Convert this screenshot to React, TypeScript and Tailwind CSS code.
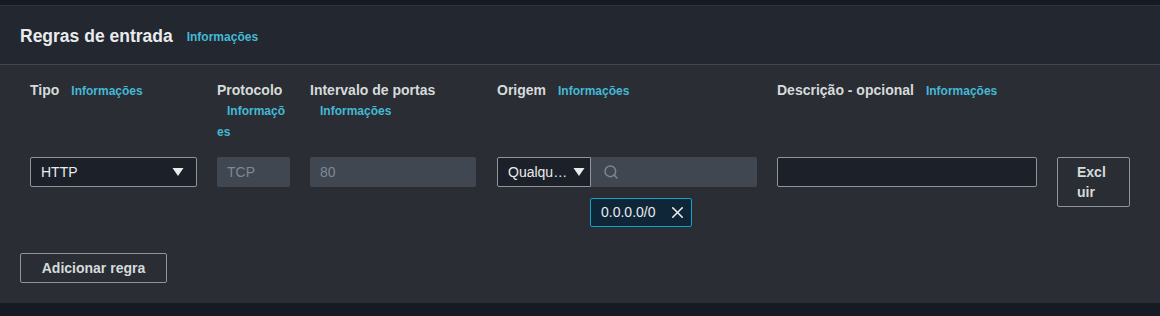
import { Search, X } from "lucide-react";

const font = { fontFamily: '"Liberation Sans", Arial, sans-serif' };

function InfoLink({ className = "" }: { className?: string }) {
  return (
    <a className={`text-[12px] font-bold text-[#44b9d6] [overflow-wrap:anywhere] ${className}`}>
      Informações
    </a>
  );
}

function Label({ text }: { text: string }) {
  return (
    <div className="text-[14px] font-bold leading-5 text-[#d5dbdb]">
      <span className="mr-[12px]">{text}</span>
      <InfoLink />
    </div>
  );
}

function Caret() {
  return (
    <svg width="12" height="10" viewBox="0 0 12 10" className="shrink-0">
      <path d="M0.5 1 L11.5 1 L6 9 Z" fill="#e9ebed" />
    </svg>
  );
}

export default function App() {
  return (
    <div style={font} className="h-[316px] w-[1160px] overflow-hidden bg-[#161a23]">
      <div className="mt-[5px] border-t border-[#2f343d]">
        <section className="bg-[#2a2d33]">
          <header className="flex h-[59px] items-center gap-[14px] border-b border-[#414750] bg-[#232730] px-5 pt-[2px]">
            <h2 className="text-[17.5px] font-bold text-[#e9ebed]">Regras de entrada</h2>
            <InfoLink className="mt-[2px]" />
          </header>

          <div className="px-[30px] pt-[15px]">
            <div className="grid grid-cols-[167px_73px_167px_260px_260px_73px] gap-x-5">
              <Label text="Tipo" />
              <div className="text-[14px] font-bold leading-5 text-[#d5dbdb] [overflow-wrap:anywhere]">
                <span>Protocolo</span>
                <br />
                <InfoLink className="ml-[10px]" />
              </div>
              <div className="text-[14px] font-bold leading-5 text-[#d5dbdb]">
                <span>Intervalo de portas</span>
                <br />
                <InfoLink className="ml-[10px]" />
              </div>
              <Label text="Origem" />
              <Label text="Descrição - opcional" />
              <div />

              <div className="col-span-6 h-[15px]" />

              <div className="flex h-[30px] items-center justify-between rounded-[2px] border border-[#8d9699] bg-[#1b2029] pl-[10px] pr-[12px] text-[14px] text-[#e9ebed]">
                <span>HTTP</span>
                <Caret />
              </div>

              <div className="flex h-[30px] items-center rounded-[2px] bg-[#414750] px-[10px] text-[14px] text-[#7d8998]">
                TCP
              </div>

              <div className="flex h-[30px] w-[166px] items-center rounded-[2px] bg-[#414750] px-[10px] text-[14px] text-[#7d8998]">
                80
              </div>

              <div className="flex flex-col items-start gap-[11px]">
                <div className="flex h-[30px] w-full">
                  <div className="flex w-[94px] items-center gap-[3px] rounded-l-[2px] border border-[#8d9699] bg-[#1b2029] pl-[10px] pr-[5px] text-[14px] text-[#e9ebed]">
                    <span className="min-w-0 flex-1 truncate">Qualquer lugar</span>
                    <Caret />
                  </div>
                  <div className="flex flex-1 items-center rounded-r-[2px] bg-[#414750] pl-[12px]">
                    <Search size={16} strokeWidth={2.2} className="text-[#7d8590]" />
                  </div>
                </div>
                <div className="ml-[93px] flex h-[29px] w-[102px] items-center gap-[12px] rounded-[2px] border border-[#0ea5c6] bg-[#0f2538] pl-[10px] text-[14px] text-[#e9ebed]">
                  <span>0.0.0.0/0</span>
                  <X size={19} strokeWidth={2} className="text-[#e9ebed]" />
                </div>
              </div>

              <div className="h-[30px] rounded-[2px] border border-[#8d9699] bg-[#1b2029]" />

              <button className="h-[50px] rounded-[2px] border border-[#8d9699] px-[19px] text-left text-[14px] font-bold leading-5 text-[#d5dbdb] [overflow-wrap:anywhere]">
                Excluir
              </button>
            </div>

            <div className="pb-[20px] pt-[26px]">
              <button className="-ml-[10px] h-[30px] w-[147px] rounded-[2px] border border-[#8d9699] text-[14px] font-bold text-[#d5dbdb]">
                Adicionar regra
              </button>
            </div>
          </div>
        </section>
      </div>
    </div>
  );
}
